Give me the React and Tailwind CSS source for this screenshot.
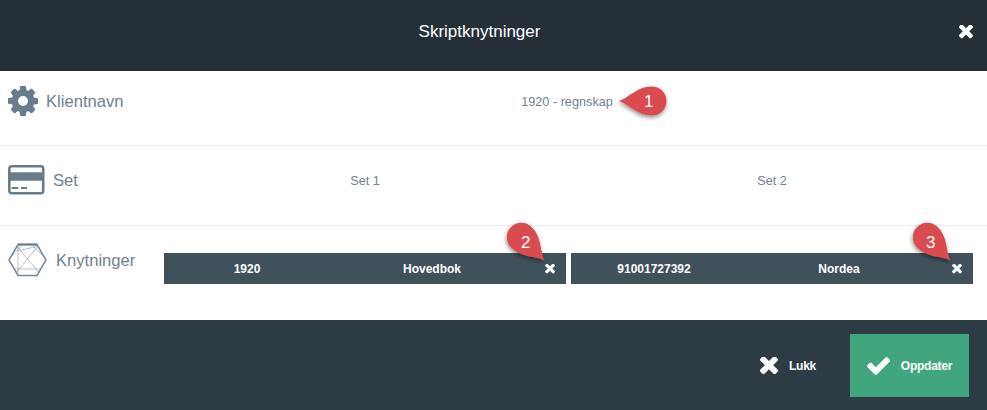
import React from "react";

function XIcon({ size, className = "" }) {
  return (
    <svg width={size} height={size} viewBox="110 302 1188 1188" fill="currentColor" className={`block ${className}`}>
      <path d="M1298 1202q0 40-28 68l-136 136q-28 28-68 28t-68-28l-294-294-294 294q-28 28-68 28t-68-28l-136-136q-28-28-28-68t28-68l294-294-294-294q-28-28-28-68t28-68l136-136q28-28 68-28t68 28l294 294 294-294q28-28 68-28t68 28l136 136q28 28 28 68t-28 68l-294 294 294 294q28 28 28 68z" />
    </svg>
  );
}

function CheckIcon() {
  return (
    <svg width="23" height="18" viewBox="121 334 1550 1188" fill="currentColor" className="block">
      <path d="M1671 566q0 40-28 68l-724 724-136 136q-28 28-68 28t-68-28l-136-136-362-362q-28-28-28-68t28-68l136-136q28-28 68-28t68 28l294 295 656-657q28-28 68-28t68 28l136 136q28 28 28 68z" />
    </svg>
  );
}

function CogIcon() {
  return (
    <svg width="30" height="30" viewBox="128 128 1536 1536" fill="#697c8b" className="block shrink-0">
      <path d="M1152 896q0-106-75-181t-181-75-181 75-75 181 75 181 181 75 181-75 75-181zm512-109v222q0 12-8 23t-20 13l-185 28q-19 54-39 91 35 50 107 138 10 12 10 25t-9 23q-27 37-99 108t-94 71q-12 0-26-9l-138-108q-44 23-91 38-16 136-29 186-7 28-36 28h-222q-14 0-24.5-8.5t-11.5-21.5l-28-184q-49-16-90-37l-141 107q-10 9-25 9-14 0-25-11-126-114-165-168-7-10-7-23 0-12 8-23 15-21 51-66.5t54-70.5q-27-50-41-99l-183-27q-13-2-21-12.5t-8-23.5v-222q0-12 8-23t19-13l186-28q14-46 39-92-40-57-107-138-10-12-10-24 0-10 9-23 26-36 98.5-107.5t94.5-71.5q13 0 26 10l138 107q44-23 91-38 16-136 29-186 7-28 36-28h222q14 0 24.5 8.5t11.5 21.5l28 184q49 16 90 37l142-107q9-9 24-9 13 0 25 10 129 119 165 170 7 8 7 22 0 12-8 23-15 21-51 66.5t-54 70.5q26 50 41 98l183 28q13 2 21 12.5t8 23.5z" />
    </svg>
  );
}

function CardIcon() {
  return (
    <svg width="37" height="30" viewBox="0 0 37 30" className="block shrink-0">
      <rect x="1.3" y="1.3" width="33.9" height="27" rx="2.5" fill="none" stroke="#697c8b" strokeWidth="2.6" />
      <rect x="1" y="7.3" width="35" height="8.4" fill="#697c8b" />
      <rect x="3.7" y="22" width="6.6" height="2" fill="#697c8b" />
      <rect x="13" y="22" width="6" height="2" fill="#697c8b" />
    </svg>
  );
}

function HexIcon() {
  const s = "#7f919e";
  return (
    <svg width="39" height="34" viewBox="0 0 39 34" className="block shrink-0">
      <path d="M6 26 H33" stroke="#dfe4e7" strokeWidth="2.5" />
      <polygon points="10,1.5 29,1.5 38,17 29,32.5 10,32.5 1,17" fill="none" stroke="#75889a" strokeWidth="1.5" />
      <path d="M10 1.5 H29" stroke="#697c8b" strokeWidth="2" />
      <g fill="none" stroke={s} strokeWidth="0.7" opacity="0.8">
        <path d="M9 3 L31 30 M30 3 L8 30 M10 2 L10 32 M14 2 L3 14 M24 2 L36 14 M10 8 L30 3" />
      </g>
    </svg>
  );
}

function Pin({ n, className, rotate, textLeft, textTop }) {
  return (
    <div className={`absolute w-[50px] h-[50px] ${className}`}>
      <svg width="50" height="50" viewBox="0 0 50 50" className="absolute inset-0 overflow-visible">
        <defs>
          <filter id={`sh${n}`} x="-30%" y="-30%" width="170%" height="170%">
            <feDropShadow dx="-0.5" dy="2" stdDeviation="2" floodColor="#000" floodOpacity="0.45" />
          </filter>
        </defs>
        <g filter={`url(#sh${n})`}>
          <path
            transform={`rotate(${rotate} 25 25)`}
            d="M0 25 C10 22 18 10.5 33 10.5 A14.5 14.5 0 0 1 33 39.5 C18 39.5 10 28 0 25 Z"
            fill="#d94c4f"
          />
        </g>
      </svg>
      <span className="absolute text-white text-[17px] leading-none" style={{ left: textLeft, top: textTop }}>{n}</span>
    </div>
  );
}

function Bar({ a, b }) {
  return (
    <div className="grid grid-cols-[166px_204px_32px] items-center h-[31px] bg-[#3f515b] text-white text-xs font-bold">
      <span className="text-center">{a}</span>
      <span className="text-center">{b}</span>
      <span className="flex justify-center"><XIcon size={10} /></span>
    </div>
  );
}

export default function App() {
  return (
    <div className="relative w-[987px] h-[410px] bg-white overflow-hidden font-['Liberation_Sans',Arial,sans-serif]">
      <header className="relative flex items-center justify-center h-[71px] pb-[7px] pr-[28px] bg-[#252f38] text-white text-[17px]">
        <span>Skriptknytninger</span>
        <XIcon size={14} className="absolute right-[14px] top-[25px]" />
      </header>

      <section className="flex h-[75px] border-b border-[#e9e9e9] pl-2 pr-[14px]">
        <div className="flex w-[156px] gap-[8px] pt-[15px] text-[#6f818f] text-[16.6px]">
          <CogIcon />
          <span className="leading-[32px]">Klientnavn</span>
        </div>
        <div className="flex-1 pt-[22px] text-center text-[12.7px] text-[#6f818f] pr-[3px]">1920 - regnskap</div>
      </section>

      <section className="flex h-[80px] border-b border-[#e9e9e9] pl-2 pr-[14px]">
        <div className="flex w-[156px] gap-[8px] pt-[19px] text-[#6f818f] text-[16.6px]">
          <CardIcon />
          <span className="leading-[32px]">Set</span>
        </div>
        <div className="flex flex-1 gap-[5px] pt-[26px] text-center text-[12.7px] text-[#6f818f]">
          <div className="flex-1">Set 1</div>
          <div className="flex-1">Set 2</div>
        </div>
      </section>

      <section className="flex h-[94px] pl-2 pr-[14px]">
        <div className="flex w-[156px] gap-[9px] pt-[17px] text-[#6f818f] text-[16.6px]">
          <HexIcon />
          <span className="leading-[36px]">Knytninger</span>
        </div>
        <div className="grid flex-1 grid-cols-2 gap-[5px] pt-[27px] content-start">
          <Bar a="1920" b="Hovedbok" />
          <Bar a="91001727392" b="Nordea" />
        </div>
      </section>

      <footer className="flex justify-end h-[90px] bg-[#2d3b44] pt-[14px] pr-[18px] text-white text-xs font-bold tracking-[-0.25px]">
        <button className="flex items-center gap-[11px] h-[63px] pr-[34px]">
          <XIcon size={18} />
          <span>Lukk</span>
        </button>
        <button className="flex items-center justify-center gap-[11px] w-[119px] h-[63px] bg-[#41a67e]">
          <CheckIcon />
          <span>Oppdater</span>
        </button>
      </footer>

      <Pin n="1" rotate={0} textLeft={25} textTop={17} className="left-[619px] top-[76px]" />
      <Pin n="2" rotate={225} textLeft={19} textTop={16} className="left-[502px] top-[218px]" />
      <Pin n="3" rotate={225} textLeft={18} textTop={16} className="left-[908px] top-[218px]" />
    </div>
  );
}
